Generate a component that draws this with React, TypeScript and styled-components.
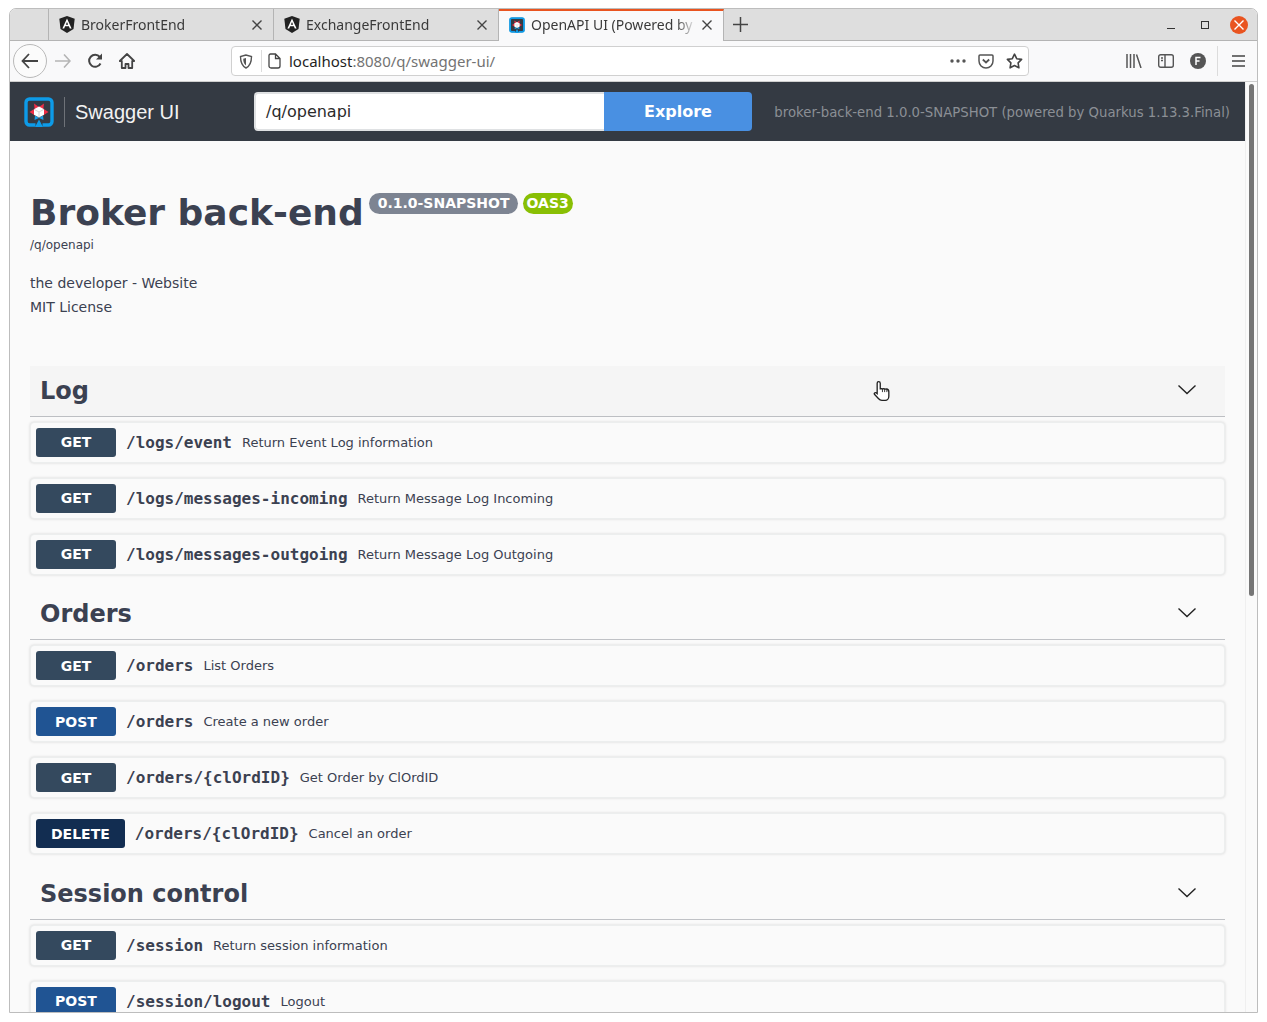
import React from "react";
import styled, { createGlobalStyle } from "styled-components";

const Global = createGlobalStyle`
  html, body { margin: 0; padding: 0; background: #fff; overflow: hidden; }
  * { box-sizing: border-box; }
`;

const pageFont = `"DejaVu Sans", sans-serif`;
const monoFont = `"DejaVu Sans Mono", monospace`;
const chromeFont = `"Noto Sans", "Open Sans", sans-serif`;

const Frame = styled.div`
  width: 1249px;
  height: 1005px;
  margin: 8px 0 0 9px;
  border: 1px solid #bdbdbd;
  border-radius: 7px 7px 0 0;
  overflow: hidden;
  display: flex;
  flex-direction: column;
  background: #fafafa;
`;

/* browser chrome */
const TabBar = styled.div`
  height: 32px;
  flex-shrink: 0;
  display: flex;
  background: #dedede;
  border-bottom: 1px solid #b4b4b4;
  font-family: ${chromeFont};
  font-size: 14px;
  color: #3a3a3a;
`;

const TabGap = styled.div`
  width: 39px;
  border-right: 1px solid #b4b4b4;
`;

const Tab = styled.div<{ $active?: boolean }>`
  width: 225px;
  height: ${(p) => (p.$active ? "32px" : "31px")};
  display: flex;
  align-items: center;
  padding: 0 11px ${(p) => (p.$active ? "3px" : "0")} 10px;
  gap: 6px;
  border-right: 1px solid #b4b4b4;
  background: ${(p) => (p.$active ? "#f9f9fa" : "transparent")};
  border-top: ${(p) => (p.$active ? "2px solid #e95420" : "none")};
`;

const TabTitle = styled.span`
  flex: 1;
  white-space: nowrap;
  -webkit-mask-image: linear-gradient(to right, #000 88%, transparent 100%);
  mask-image: linear-gradient(to right, #000 88%, transparent 100%);
`;

const NewTab = styled.div`
  width: 33px;
  display: flex;
  align-items: center;
  justify-content: center;
`;

const WindowButtons = styled.div`
  margin-left: auto;
  display: flex;
  align-items: center;
  gap: 20px;
  padding-right: 9px;
`;

const WindowButton = styled.div<{ $close?: boolean }>`
  width: 18px;
  height: 18px;
  border-radius: 50%;
  display: flex;
  align-items: center;
  justify-content: center;
  margin-left: -4px;
  background: ${(p) => (p.$close ? "#e95420" : "transparent")};
`;

const Toolbar = styled.div`
  height: 41px;
  flex-shrink: 0;
  display: flex;
  align-items: center;
  background: #f9f9fa;
  border-bottom: 1px solid #cfcfcf;
  padding-left: 3px;
`;

const BackCircle = styled.div`
  width: 34px;
  height: 34px;
  border: 1px solid #b9b9b9;
  border-radius: 50%;
  display: flex;
  align-items: center;
  justify-content: center;
  background: #fbfbfb;
`;

const NavButton = styled.div`
  width: 32px;
  height: 32px;
  display: flex;
  align-items: center;
  justify-content: center;
`;

const UrlBar = styled.div`
  width: 798px;
  height: 30px;
  margin-left: 88px;
  display: flex;
  align-items: center;
  background: #fff;
  border: 1px solid #d0d0d0;
  border-radius: 4px;
  padding: 0 5px 0 7px;
  font-family: ${chromeFont};
  font-size: 15px;
`;

const UrlDivider = styled.div`
  width: 1px;
  height: 22px;
  background: #dcdcdc;
  margin: 0 6px 0 8px;
`;

const UrlText = styled.span`
  margin-left: 8px;
  color: #737373;
  flex: 1;
  b {
    font-weight: 400;
    color: #1f1f1f;
  }
`;

const UrlIcons = styled.div`
  display: flex;
  align-items: center;
  gap: 12px;
`;

const ToolIcons = styled.div`
  margin-left: auto;
  display: flex;
  align-items: center;
  height: 100%;
  padding-right: 3px;
`;

const ToolIcon = styled.div`
  width: 32px;
  display: flex;
  justify-content: center;
`;

const ToolSep = styled.div`
  width: 1px;
  height: 30px;
  margin: 0 4px 0 3px;
  background: #dcdcdc;
`;

/* page */
const Viewport = styled.div`
  flex: 1;
  min-height: 0;
  display: flex;
`;

const Scroller = styled.div`
  flex: 1;
  min-width: 0;
  overflow: hidden;
  position: relative;
  font-family: ${pageFont};
  color: #3b4151;
`;

const ScrollTrack = styled.div`
  width: 12px;
  flex-shrink: 0;
  padding: 2px 3px 0 3px;
  background: #fafafa;
  border-left: 1px solid #efefef;
`;

const ScrollThumb = styled.div`
  height: 512px;
  border-radius: 3px;
  background: #767676;
`;

const TopBar = styled.div`
  height: 59px;
  background: #343a43;
  display: flex;
  align-items: center;
  padding: 0 15px 0 14px;
`;

const Brand = styled.div`
  width: 230px;
  display: flex;
  align-items: center;
  flex-shrink: 0;
`;

const BrandDivider = styled.div`
  width: 1px;
  height: 30px;
  background: #6e7278;
  margin: 0 10px;
`;

const BrandName = styled.span`
  font-family: "Liberation Sans", Arial, sans-serif;
  font-size: 20px;
  margin-top: 2px;
  color: #f2f2f2;
`;

const SpecInput = styled.div`
  width: 350px;
  height: 39px;
  flex-shrink: 0;
  background: #fff;
  border: 2px solid #dfe1e3;
  border-right: none;
  border-radius: 4px 0 0 4px;
  padding: 0 10px;
  display: flex;
  align-items: center;
  font-size: 16px;
  color: #2b2b2b;
`;

const ExploreButton = styled.div`
  width: 148px;
  height: 39px;
  flex-shrink: 0;
  background: #4990e2;
  border-radius: 0 4px 4px 0;
  display: flex;
  align-items: center;
  justify-content: center;
  color: #fff;
  font-size: 16px;
  font-weight: 700;
`;

const TopBarNote = styled.span`
  margin-left: auto;
  margin-top: 2px;
  font-size: 13.27px;
  white-space: nowrap;
  color: #8b8f95;
`;

const Content = styled.div`
  padding: 0 20px;
`;

const Info = styled.div`
  padding: 51px 0 0;
  margin-bottom: 47.1px;
`;

const TitleRow = styled.div`
  display: flex;
  align-items: flex-start;
`;

const Title = styled.h1`
  margin: 0;
  font-size: 36px;
  line-height: 42px;
  font-weight: 700;
`;

const Badge = styled.span<{ $bg: string; $pad: string }>`
  height: 21px;
  margin: 1px 0 0 5px;
  padding: ${(p) => p.$pad};
  border-radius: 11px;
  background: ${(p) => p.$bg};
  color: #fff;
  font-size: 14px;
  font-weight: 700;
  line-height: 20px;
  white-space: nowrap;
`;

const SpecUrl = styled.div`
  font-size: 12px;
  line-height: 16px;
  margin-top: 3px;
`;

const InfoLine = styled.div<{ $first?: boolean }>`
  font-size: 14px;
  line-height: 24px;
  margin-top: ${(p) => (p.$first ? "18px" : "0")};
`;

const SectionHead = styled.div<{ $hover?: boolean }>`
  height: 50.5px;
  padding: 0 28px 0 10px;
  display: flex;
  align-items: center;
  justify-content: space-between;
  border-bottom: 1px solid rgba(59, 65, 81, 0.3);
  background: ${(p) => (p.$hover ? "#f5f5f5" : "transparent")};
  margin-bottom: 5px;
`;

const SectionTitle = styled.h3`
  margin: 0;
  font-size: 24px;
  font-weight: 700;
  line-height: 48px;
`;

const Section = styled.section`
  margin-bottom: 15px;
`;

const Op = styled.div`
  height: 41px;
  margin-bottom: 15px;
  display: flex;
  align-items: center;
  padding: 0 5px;
  background: #fafafa;
  border: 1px solid #eceeee;
  border-radius: 4px;
  box-shadow: 0 0 3px rgba(0, 0, 0, 0.15);
`;

const methodColors: Record<string, string> = {
  GET: "#34495e",
  POST: "#205493",
  DELETE: "#122d51",
};

const Method = styled.span<{ $method: string }>`
  min-width: 80px;
  height: 29px;
  padding: 0 15px;
  border-radius: 3px;
  background: ${(p) => methodColors[p.$method]};
  color: #fff;
  font-size: 14px;
  font-weight: 700;
  display: flex;
  align-items: center;
  justify-content: center;
`;

const OpPath = styled.span`
  font-family: ${monoFont};
  font-size: 16px;
  font-weight: 700;
  margin-left: 10px;
  white-space: nowrap;
`;

const OpSummary = styled.span`
  font-size: 13px;
  margin-left: 10px;
  white-space: nowrap;
`;

const Cursor = styled.svg`
  position: absolute;
  left: 863px;
  top: 298px;
`;

/* drawings */
const AngularIcon = () => (
  <svg width="16" height="17" viewBox="0 0 16 17">
    <path d="M8 0 .3 2.8l1.2 10.2L8 17l6.5-4 1.2-10.2z" fill="#222" />
    <path d="M8 2.4 3.4 12.6h1.8l.9-2.3h3.8l.9 2.3h1.8zM6.8 8.8 8 5.9l1.2 2.9z" fill="#fff" />
  </svg>
);

const QuarkusIcon = ({ size }: { size: number }) => (
  <svg width={size} height={size} viewBox="0 0 30 30">
    <rect x="1.500" y="1.500" width="27" height="27" rx="3.500" fill="#343a43" />
    <path
      d="M18.500 28h6a3.500 3.500 0 0 0 3.500-3.500V5.500A3.500 3.500 0 0 0 24.500 2H5.500A3.500 3.500 0 0 0 2 5.500v19A3.500 3.500 0 0 0 5.500 28h6"
      fill="none"
      stroke="#0d9be8"
      strokeWidth="3.4"
    />
    <path d="M15 22.500 19 30h-8z" fill="#0d9be8" />
    <path d="M10 6.500 15 10l-4 5z" fill="#ef2f47" />
    <path d="M20 6.500 15 10l4 5z" fill="#ef2f47" />
    <path d="M5.500 15 11 11.500V18.500z" fill="#ef2f47" />
    <path d="M24.500 15 19 11.500V18.500z" fill="#ef2f47" />
    <path d="M10.500 23 11 18.500l4 2.500z" fill="#1aa0ea" />
    <path d="M19.500 23 19 18.500l-4 2.500z" fill="#1aa0ea" />
    <path d="M15 9.500 20 12.300v5.400L15 20.500l-5-2.800v-5.400z" fill="#fff" />
    <path d="M15 15v5.500M10 12.300 15 15l5-2.700" stroke="#c9c9c9" strokeWidth="0.8" fill="none" />
  </svg>
);

const Chevron = () => (
  <svg width="20" height="20" viewBox="0 0 20 20" fill="none">
    <path d="M1.500 4.500 10 12.500l8.500-8" stroke="#222" strokeWidth="1.400" />
  </svg>
);

const CloseX = ({ color = "#444" }: { color?: string }) => (
  <svg width="10" height="10" viewBox="0 0 10 10" fill="none">
    <path d="m.5.500 9 9m0-9-9 9" stroke={color} strokeWidth="1.400" />
  </svg>
);

const tags = [
  {
    name: "Log",
    hover: true,
    ops: [
      ["GET", "/logs/event", "Return Event Log information"],
      ["GET", "/logs/messages-incoming", "Return Message Log Incoming"],
      ["GET", "/logs/messages-outgoing", "Return Message Log Outgoing"],
    ],
  },
  {
    name: "Orders",
    ops: [
      ["GET", "/orders", "List Orders"],
      ["POST", "/orders", "Create a new order"],
      ["GET", "/orders/{clOrdID}", "Get Order by ClOrdID"],
      ["DELETE", "/orders/{clOrdID}", "Cancel an order"],
    ],
  },
  {
    name: "Session control",
    ops: [
      ["GET", "/session", "Return session information"],
      ["POST", "/session/logout", "Logout"],
    ],
  },
];

export default function App() {
  return (
    <>
      <Global />
      <Frame>
        <TabBar>
          <TabGap />
          <Tab>
            <AngularIcon />
            <TabTitle>BrokerFrontEnd</TabTitle>
            <CloseX />
          </Tab>
          <Tab>
            <AngularIcon />
            <TabTitle>ExchangeFrontEnd</TabTitle>
            <CloseX />
          </Tab>
          <Tab $active>
            <QuarkusIcon size={16} />
            <TabTitle>OpenAPI UI (Powered by</TabTitle>
            <CloseX />
          </Tab>
          <NewTab>
            <svg width="15" height="15" viewBox="0 0 15 15">
              <path d="M7.500 0v15M0 7.500h15" stroke="#444" strokeWidth="1.500" />
            </svg>
          </NewTab>
          <WindowButtons>
            <WindowButton>
              <svg width="8" height="8" viewBox="0 0 8 8">
                <path d="M0 7.500h8" stroke="#333" strokeWidth="1" />
              </svg>
            </WindowButton>
            <WindowButton>
              <svg width="8" height="8" viewBox="0 0 8 8" fill="none">
                <rect x=".5" y=".5" width="7" height="7" stroke="#333" />
              </svg>
            </WindowButton>
            <WindowButton $close>
              <CloseX color="#fff" />
            </WindowButton>
          </WindowButtons>
        </TabBar>

        <Toolbar>
          <BackCircle>
            <svg width="18" height="16" viewBox="0 0 18 16" fill="none">
              <path d="M8 1 1.500 8 8 15M1.500 8H17" stroke="#444" strokeWidth="1.800" />
            </svg>
          </BackCircle>
          <NavButton>
            <svg width="16" height="14" viewBox="0 0 16 14" fill="none">
              <path d="m9 .5 6 6.500-6 6.500M15 7H0" stroke="#b5b5b5" strokeWidth="1.600" />
            </svg>
          </NavButton>
          <NavButton>
            <svg width="16" height="16" viewBox="0 0 16 16" fill="none">
              <path d="M13.500 10.500A6 6 0 1 1 12.800 4" stroke="#444" strokeWidth="2" />
              <path d="M15 .5V6.500H9z" fill="#444" />
            </svg>
          </NavButton>
          <NavButton>
            <svg width="16" height="16" viewBox="0 0 16 16" fill="none">
              <path d="M8 1 .8 8h2v7h3.700v-4h3v4h3.700V8h2z" stroke="#444" strokeWidth="1.800" strokeLinejoin="round" />
            </svg>
          </NavButton>
          <UrlBar>
            <svg width="14" height="15" viewBox="0 0 14 15" fill="none">
              <path d="M7 1 1.500 2.500c0 6 1.500 9.500 5.500 11.500 4-2 5.500-5.500 5.500-11.500z" stroke="#555" strokeWidth="1.400" />
              <path d="M7 4v7.500C5 10 4.300 8 4.200 4.800z" fill="#555" />
            </svg>
            <UrlDivider />
            <svg width="13" height="16" viewBox="0 0 13 16" fill="none">
              <path d="M2.500 1h5L12 5.500V13a2 2 0 0 1-2 2H3a2 2 0 0 1-2-2V2.500A1.500 1.500 0 0 1 2.500 1zM7.500 1v4.500H12" stroke="#444" strokeWidth="1.300" />
            </svg>
            <UrlText>
              <b>localhost</b>:8080/q/swagger-ui/
            </UrlText>
            <UrlIcons>
              <svg width="16" height="4" viewBox="0 0 16 4" fill="#555">
                <circle cx="2" cy="2" r="1.700" />
                <circle cx="8" cy="2" r="1.700" />
                <circle cx="14" cy="2" r="1.700" />
              </svg>
              <svg width="16" height="15" viewBox="0 0 16 15" fill="none">
                <path d="M2 1h12a1 1 0 0 1 1 1v5a7 7 0 0 1-14 0V2a1 1 0 0 1 1-1z" stroke="#555" strokeWidth="1.500" />
                <path d="m4.800 5.500 3.200 3 3.200-3" stroke="#555" strokeWidth="1.800" />
              </svg>
              <svg width="17" height="16" viewBox="0 0 17 16" fill="none">
                <path d="m8.500 1.200 2.200 4.500 4.900.7-3.500 3.500.8 4.900-4.400-2.300-4.400 2.300.8-4.900L1.400 6.400l4.900-.7z" stroke="#444" strokeWidth="1.600" strokeLinejoin="round" />
              </svg>
            </UrlIcons>
          </UrlBar>
          <ToolIcons>
            <ToolIcon>
              <svg width="16" height="14" viewBox="0 0 16 14" fill="none" stroke="#555" strokeWidth="1.500">
                <path d="M1 0v14M4.500 0v14M8 0v14M10.500.5 15 14" />
              </svg>
            </ToolIcon>
            <ToolIcon>
              <svg width="16" height="14" viewBox="0 0 16 14" fill="none" stroke="#555" strokeWidth="1.400">
                <rect x=".7" y=".7" width="14.600" height="12.600" rx="2" />
                <path d="M7 1v12M3 4h2M3 6.500h2" />
              </svg>
            </ToolIcon>
            <ToolIcon>
              <svg width="16" height="16" viewBox="0 0 16 16">
                <circle cx="8" cy="8" r="8" fill="#555" />
                <path d="M6 12V4.500h4.500M6 8h3.500" stroke="#fff" strokeWidth="1.500" fill="none" />
              </svg>
            </ToolIcon>
            <ToolSep />
            <ToolIcon>
              <svg width="13" height="12" viewBox="0 0 13 12" stroke="#444" strokeWidth="1.500">
                <path d="M0 1h13M0 6h13M0 11h13" />
              </svg>
            </ToolIcon>
          </ToolIcons>
        </Toolbar>

        <Viewport>
          <Scroller>
            <TopBar>
              <Brand>
                <QuarkusIcon size={30} />
                <BrandDivider />
                <BrandName>Swagger UI</BrandName>
              </Brand>
              <SpecInput>/q/openapi</SpecInput>
              <ExploreButton>Explore</ExploreButton>
              <TopBarNote>broker-back-end 1.0.0-SNAPSHOT (powered by Quarkus 1.13.3.Final)</TopBarNote>
            </TopBar>

            <Content>
              <Info>
                <TitleRow>
                  <Title>Broker back-end</Title>
                  <Badge $bg="#7d8492" $pad="0 8px 0 9px">0.1.0-SNAPSHOT</Badge>
                  <Badge $bg="#89bf04" $pad="0 4px">OAS3</Badge>
                </TitleRow>
                <SpecUrl>/q/openapi</SpecUrl>
                <InfoLine $first>the developer - Website</InfoLine>
                <InfoLine>MIT License</InfoLine>
              </Info>

              {tags.map((tag) => (
                <Section key={tag.name}>
                  <SectionHead $hover={tag.hover}>
                    <SectionTitle>{tag.name}</SectionTitle>
                    <Chevron />
                  </SectionHead>
                  {tag.ops.map(([method, path, summary]) => (
                    <Op key={method + path}>
                      <Method $method={method}>{method}</Method>
                      <OpPath>{path}</OpPath>
                      <OpSummary>{summary}</OpSummary>
                    </Op>
                  ))}
                </Section>
              ))}
            </Content>

            <Cursor width="20" height="22" viewBox="0 0 18 20">
              <path
                d="M5 1.500c1 0 1.500.6 1.500 1.500v5l1-.2 1 .3 1.200-.2 1.100.4 1.300-.1c1.500.2 2.200 1 2.200 2.500v4c0 2-1.300 3.800-3.300 3.800H8c-1.400 0-2.300-.6-3.200-1.700L1.200 13c-.6-.8.500-2 1.500-1.400l1 .8V3c0-1 .4-1.500 1.300-1.500z"
                fill="#fff"
                stroke="#222"
                strokeWidth="1.200"
              />
              <path d="M8.500 8v3M10.500 8v3M12.500 8.500V11" stroke="#222" strokeWidth=".8" />
            </Cursor>
          </Scroller>
          <ScrollTrack>
            <ScrollThumb />
          </ScrollTrack>
        </Viewport>
      </Frame>
    </>
  );
}
